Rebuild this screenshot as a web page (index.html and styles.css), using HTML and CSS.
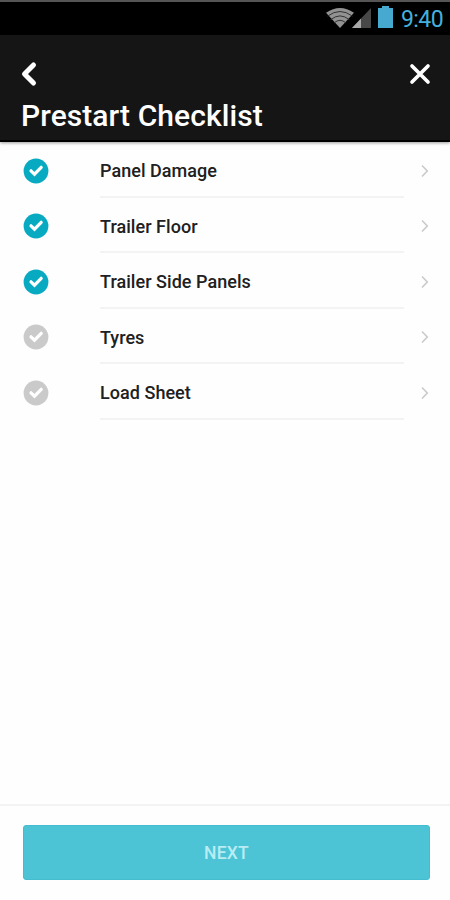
FILE: index.html
```html
<!DOCTYPE html>
<html lang="en">
<head>
<meta charset="utf-8">
<title>Prestart Checklist</title>
<link rel="stylesheet" href="styles.css">
</head>
<body>
<svg class="defs" width="0" height="0" aria-hidden="true">
  <symbol id="check" viewBox="0 0 26 26"><circle cx="13" cy="13" r="12.4" fill="currentColor"/><path d="M8 12.8l3.5 3.4 6.7-6.9" fill="none" stroke="#fff" stroke-width="3.2" stroke-linecap="round"/></symbol>
  <symbol id="chevron" viewBox="0 0 10 14"><path d="M2 1.5L7.3 7 2 12.5" fill="none" stroke="#cacaca" stroke-width="1.6"/></symbol>
</svg>
<div class="screen">
  <div class="status">
    <svg class="wifi" width="28" height="20" viewBox="0 0 28 20"><path d="M0 4.8Q14-4.8 28 4.8L14 20z" fill="#929292"/><path d="M1.5 8.2Q14-1.2 26.5 8.2M4.5 11.8Q14 4 23.5 11.8M8 15Q14 9.6 20 15" fill="none" stroke="#333" stroke-width="1"/></svg>
    <svg class="signal" width="19" height="20" viewBox="0 0 19 20"><path d="M19 0v20H0z" fill="#484848"/><path d="M9 10.5V20H0z" fill="#a8a8a8"/></svg>
    <svg class="battery" width="15" height="22" viewBox="0 0 15 22"><path d="M4 0h7v2h4v20H0V2h4z" fill="#45a9d0"/></svg>
    <span class="clock">9:40</span>
  </div>
  <header class="header">
    <div class="actions">
      <svg width="18" height="26" viewBox="0 0 18 26"><path d="M13.5 4L4.5 13l9 9" fill="none" stroke="#fff" stroke-width="5" stroke-linecap="round" stroke-linejoin="round"/></svg>
      <svg width="22" height="22" viewBox="0 0 22 22"><path d="M3 3l16 16M19 3L3 19" fill="none" stroke="#fff" stroke-width="3.7" stroke-linecap="round"/></svg>
    </div>
    <h1>Prestart Checklist</h1>
  </header>
  <ul class="list">
    <li><svg class="check done"><use href="#check"/></svg><span class="label"><b>Panel Damage</b></span><svg class="chevron"><use href="#chevron"/></svg></li>
    <li><svg class="check done"><use href="#check"/></svg><span class="label"><b>Trailer Floor</b></span><svg class="chevron"><use href="#chevron"/></svg></li>
    <li><svg class="check done"><use href="#check"/></svg><span class="label"><b>Trailer Side Panels</b></span><svg class="chevron"><use href="#chevron"/></svg></li>
    <li><svg class="check"><use href="#check"/></svg><span class="label"><b>Tyres</b></span><svg class="chevron"><use href="#chevron"/></svg></li>
    <li><svg class="check"><use href="#check"/></svg><span class="label"><b>Load Sheet</b></span><svg class="chevron"><use href="#chevron"/></svg></li>
  </ul>
  <footer class="footer"><button class="next">NEXT</button></footer>
</div>
</body>
</html>
```
FILE: styles.css
```css
* { box-sizing: border-box; }
body { margin: 0; font-family: Roboto, sans-serif; background: #fefefe; }
.defs { display: block; }
.screen { width: 450px; height: 900px; display: flex; flex-direction: column; }
.status {
  height: 35px; background: #000; border-top: 2px solid #555;
  display: flex; align-items: flex-start; justify-content: flex-end; padding: 5px 7px 0 0;
}
.wifi { margin-top: 1px; }
.signal { margin-left: -2px; margin-top: 1px; }
.battery { margin-left: 7px; margin-top: -1px; }
.clock { margin-left: 8px; color: #45b0dc; font-size: 23px; line-height: 24px; letter-spacing: -.6px; padding-top: 1px; }
.header {
  height: 107px; background: #151515; border-bottom: 2px solid #000;
  box-shadow: 0 1px 3px rgba(0, 0, 0, .4); padding: 26px 19px 0 20px;
}
.actions { display: flex; justify-content: space-between; align-items: center; height: 26px; }
h1 { margin: 12px 0 0 1px; color: #fff; font-size: 30px; line-height: 34px; font-weight: 500; letter-spacing: .08px; white-space: nowrap; }
.list { list-style: none; margin: 0; padding: 0 20px 0 23px; flex: 1; }
.list li { display: flex; align-items: center; height: 55.5px; }
.list li .label { margin-left: 51px; width: 304px; height: 55.5px; border-bottom: 2px solid #f3f3f3; display: flex; align-items: center; }
.label b { font-weight: 500; font-size: 18px; color: #202020; letter-spacing: .04px; white-space: nowrap; padding-top: 4px; }
.check { width: 26px; height: 26px; color: #cacaca; margin-top: 2px; }
.check.done { color: #07aac1; }
.chevron { width: 10px; height: 14px; margin: 2px 0 0 16px; }
.footer { height: 96px; border-top: 2px solid #f3f3f3; padding: 19px 20px 0 23px; }
.next {
  display: block; width: 100%; height: 55px; border: 1px solid #43bdcf; border-radius: 3px; padding: 0;
  background: #4dc4d5; color: #b8edf4; font: 500 17.5px Roboto, sans-serif; letter-spacing: .2px;
}
```
